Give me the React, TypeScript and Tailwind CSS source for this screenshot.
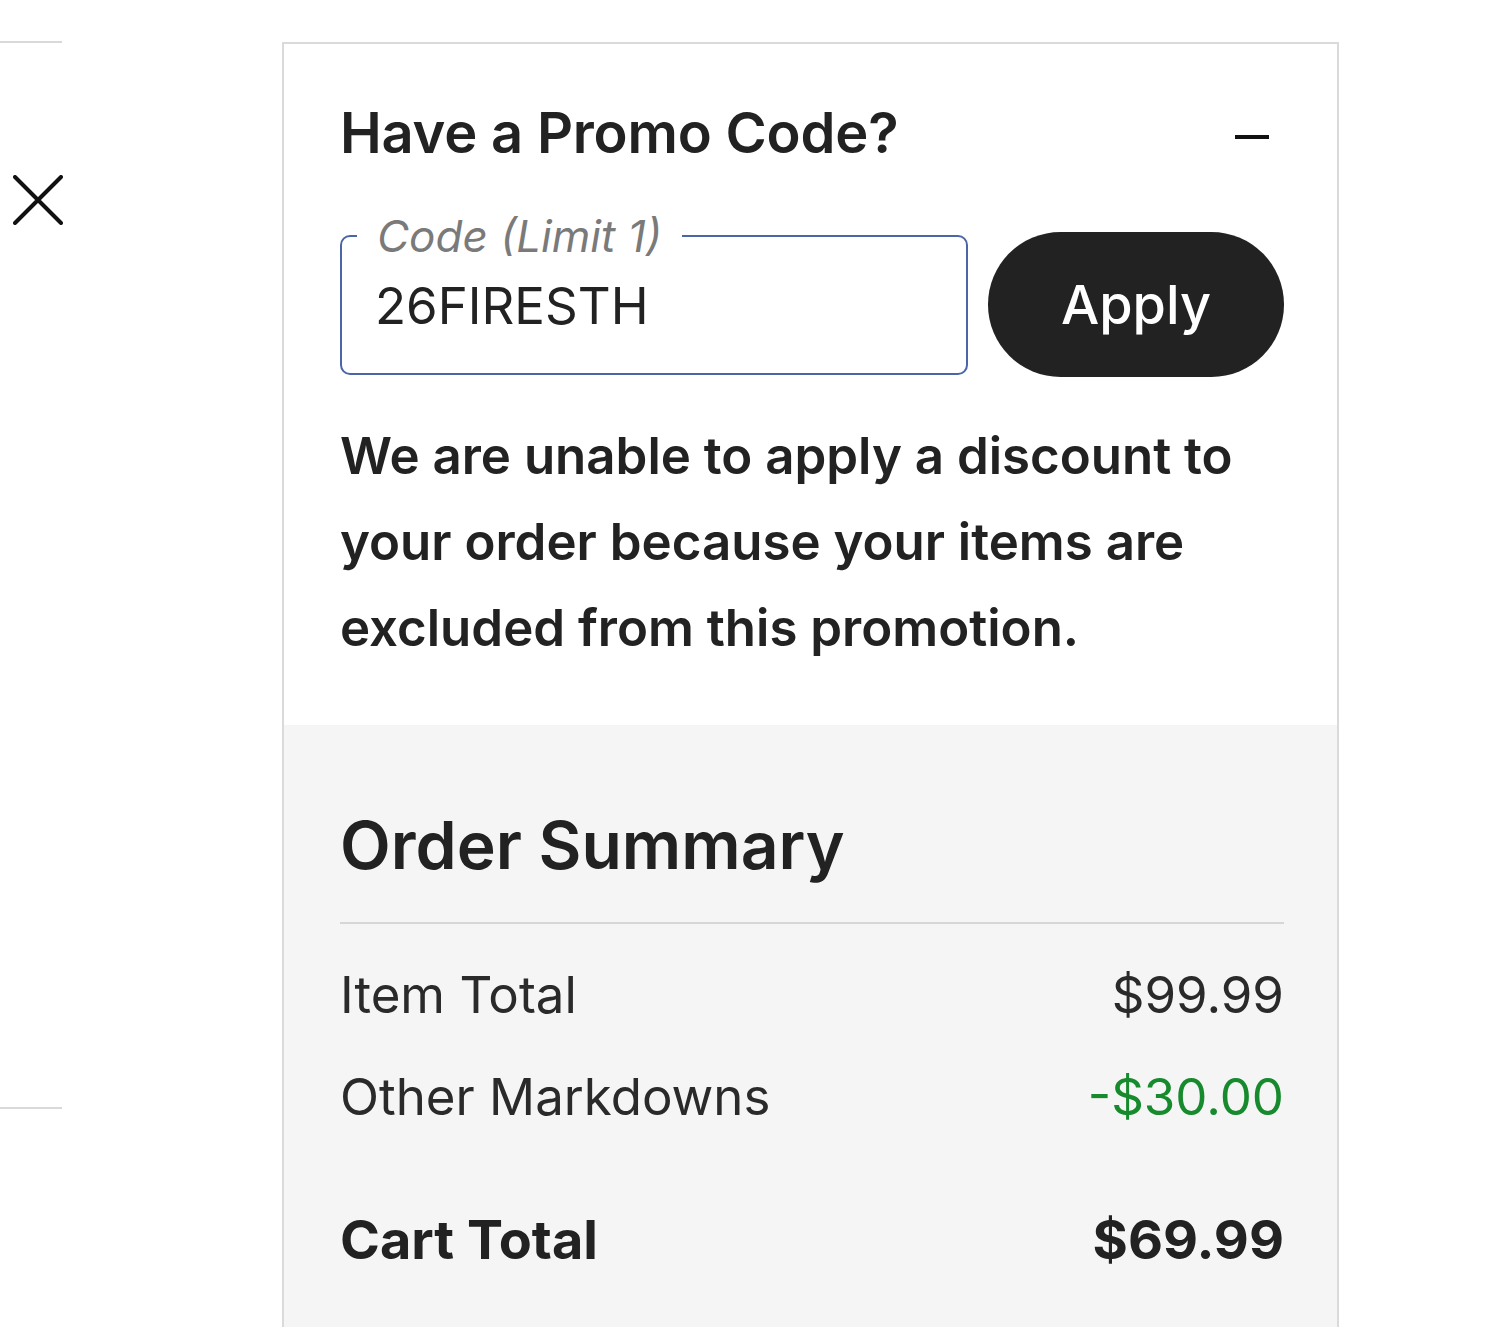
import React from "react";

export default function App() {
  return (
    <div className="w-[1500px] h-[1327px] bg-white overflow-hidden flex text-[#222]" style={{ fontFamily: "Inter, 'Liberation Sans', Arial, sans-serif" }}>
      {/* left sliver */}
      <div className="w-[62px] flex flex-col shrink-0">
        <div className="mt-[41px] h-[2px] bg-[#d9d9d9]" />
        <div className="mt-[132px] ml-[13px] w-[50px] h-[50px]">
          <svg viewBox="0 0 50 50" width="50" height="50">
            <path d="M2 2 L48 48 M48 2 L2 48" stroke="#111" strokeWidth="4" strokeLinecap="round" fill="none" />
          </svg>
        </div>
        <div className="mt-[882px] h-[2px] bg-[#d9d9d9]" />
      </div>

      {/* panel */}
      <div className="ml-[220px] mt-[42px] w-[1057px] border-2 border-b-0 border-[#dadada] flex flex-col shrink-0">
        <div className="bg-white pl-[56px] pr-[53px] pt-[55px] pb-[54px]">
          <div className="flex items-center justify-between h-[68px]">
            <h2 className="text-[56px] leading-[68px] font-semibold tracking-[-0.2px]">Have a Promo Code?</h2>
            <div className="w-[34px] h-[4px] bg-[#111] mr-[15px] mt-[8px]" />
          </div>
          <div className="mt-[65px] flex items-center gap-[20px]">
            <div className="relative flex-1 h-[140px] border-2 border-[#4a66a8] rounded-[10px] flex items-center pl-[33px]">
              <span className="absolute left-[15px] top-[-28px] bg-white px-[20px] text-[44px] leading-[54px] italic text-[#7a7a7a]">Code (Limit 1)</span>
              <span className="text-[51px] leading-[60px] mt-[2px]">26FIRESTH</span>
            </div>
            <button className="w-[296px] h-[145px] rounded-full bg-[#222] text-white text-[54px] font-medium flex items-center justify-center">Apply</button>
          </div>
          <p className="mt-[36px] text-[51px] leading-[86px] font-semibold">
            We are unable to apply a discount to your order because your items are excluded from this promotion.
          </p>
        </div>
        <div className="flex-1 bg-[#f5f5f6] pl-[56px] pr-[53px] pt-[80px]">
          <h3 className="text-[66px] leading-[80px] font-semibold">Order Summary</h3>
          <div className="mt-[37px] h-[2px] bg-[#d6d6d6]" />
          <div className="mt-[40px] flex justify-between text-[51px] leading-[62px] text-[#2a2a2a]">
            <span>Item Total</span>
            <span>$99.99</span>
          </div>
          <div className="mt-[40px] flex justify-between text-[51px] leading-[62px] text-[#2a2a2a]">
            <span>Other Markdowns</span>
            <span className="text-[#168a2c]">-$30.00</span>
          </div>
          <div className="mt-[81px] flex justify-between text-[54px] leading-[62px] font-bold">
            <span>Cart Total</span>
            <span>$69.99</span>
          </div>
        </div>
      </div>
    </div>
  );
}
